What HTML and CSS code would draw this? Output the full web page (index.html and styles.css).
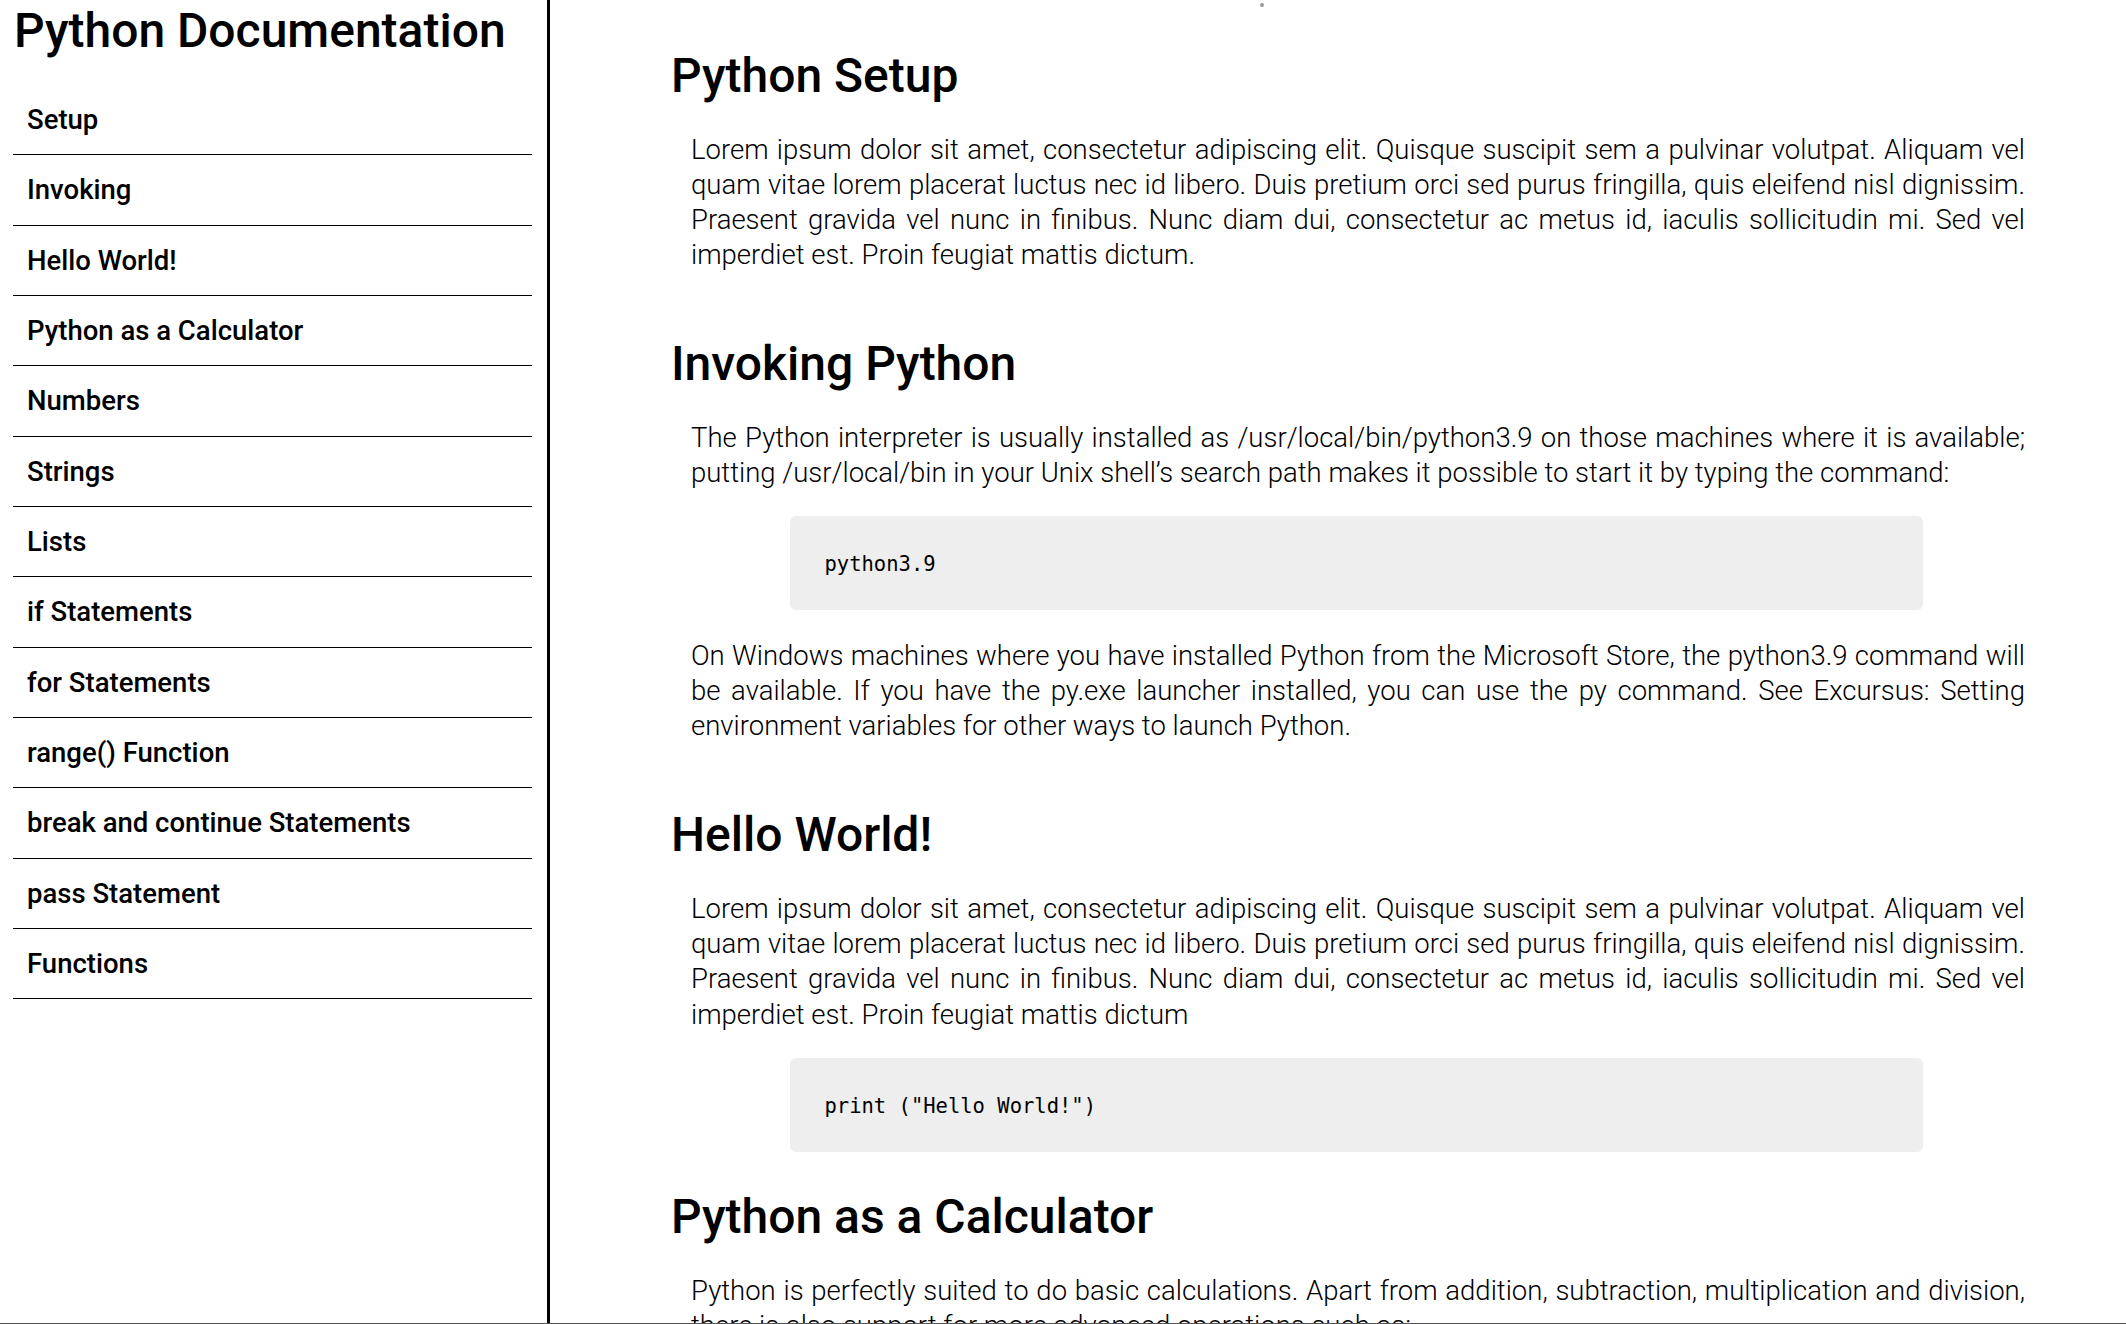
FILE: index.html
```html
<!DOCTYPE html>
<html lang="en">
<head>
<meta charset="utf-8">
<title>Python Documentation</title>
<link rel="stylesheet" href="styles.css">
</head>
<body>
<div class="page">
  <nav class="sidebar">
    <header class="brand">Python Documentation</header>
    <ul class="nav-list">
      <li class="nav-item"><a class="nav-link" href="#setup">Setup</a></li>
      <li class="nav-item"><a class="nav-link" href="#invoking">Invoking</a></li>
      <li class="nav-item"><a class="nav-link" href="#hello">Hello World!</a></li>
      <li class="nav-item"><a class="nav-link" href="#calc">Python as a Calculator</a></li>
      <li class="nav-item"><a class="nav-link" href="#numbers">Numbers</a></li>
      <li class="nav-item"><a class="nav-link" href="#strings">Strings</a></li>
      <li class="nav-item"><a class="nav-link" href="#lists">Lists</a></li>
      <li class="nav-item"><a class="nav-link" href="#if">if Statements</a></li>
      <li class="nav-item"><a class="nav-link" href="#for">for Statements</a></li>
      <li class="nav-item"><a class="nav-link" href="#range">range() Function</a></li>
      <li class="nav-item"><a class="nav-link" href="#break">break and continue Statements</a></li>
      <li class="nav-item"><a class="nav-link" href="#pass">pass Statement</a></li>
      <li class="nav-item"><a class="nav-link" href="#functions">Functions</a></li>
    </ul>
  </nav>
  <main class="content">
    <span class="dot"></span>
    <section class="doc-section" id="setup">
      <h2 class="doc-title">Python Setup</h2>
      <p class="doc-text">Lorem ipsum dolor sit amet, consectetur adipiscing elit. Quisque suscipit sem a pulvinar volutpat. Aliquam vel quam vitae lorem placerat luctus nec id libero. Duis pretium orci sed purus fringilla, quis eleifend nisl dignissim. Praesent gravida vel nunc in finibus. Nunc diam dui, consectetur ac metus id, iaculis sollicitudin mi. Sed vel imperdiet est. Proin feugiat mattis dictum.</p>
    </section>
    <section class="doc-section" id="invoking">
      <h2 class="doc-title">Invoking Python</h2>
      <p class="doc-text">The Python interpreter is usually installed as /usr/local/bin/python3.9 on those machines where it is available; putting /usr/local/bin in your Unix shell’s search path makes it possible to start it by typing the command:</p>
      <pre class="code-block"><code>python3.9</code></pre>
      <p class="doc-text">On Windows machines where you have installed Python from the Microsoft Store, the python3.9 command will be available. If you have the py.exe launcher installed, you can use the py command. See Excursus: Setting environment variables for other ways to launch Python.</p>
    </section>
    <section class="doc-section" id="hello">
      <h2 class="doc-title">Hello World!</h2>
      <p class="doc-text">Lorem ipsum dolor sit amet, consectetur adipiscing elit. Quisque suscipit sem a pulvinar volutpat. Aliquam vel quam vitae lorem placerat luctus nec id libero. Duis pretium orci sed purus fringilla, quis eleifend nisl dignissim. Praesent gravida vel nunc in finibus. Nunc diam dui, consectetur ac metus id, iaculis sollicitudin mi. Sed vel imperdiet est. Proin feugiat mattis dictum</p>
      <pre class="code-block"><code>print ("Hello World!")</code></pre>
    </section>
    <section class="doc-section" id="calc">
      <h2 class="doc-title">Python as a Calculator</h2>
      <p class="doc-text">Python is perfectly suited to do basic calculations. Apart from addition, subtraction, multiplication and division, there is also support for more advanced operations such as:</p>
    </section>
  </main>
</div>
</body>
</html>
```

FILE: styles.css
```css
html, body {
  margin: 0;
  padding: 0;
  height: 100%;
  background: #ffffff;
  overflow: hidden;
}

body {
  font-family: Roboto, "Liberation Sans", sans-serif;
  color: #000;
  border-bottom: 1px solid #555;
  box-sizing: border-box;
}

.page {
  display: flex;
  height: 100%;
  align-items: stretch;
}

.sidebar {
  flex: 0 0 547px;
  border-right: 3px solid #000;
  display: flex;
  flex-direction: column;
}

.brand {
  font-size: 48px;
  font-weight: 500;
  line-height: 56px;
  margin: 3px 0 0 14px;
  white-space: nowrap;
}

.nav-list {
  list-style: none;
  margin: 26px 0 0 13px;
  padding: 0;
  width: 519px;
}

.nav-item {
  border-bottom: 1px solid #000;
  height: 69.33px;
  display: flex;
  align-items: center;
}

.nav-link {
  font-size: 27.5px;
  font-weight: 500;
  color: #000;
  text-decoration: none;
  padding-left: 14px;
}

.content {
  flex: 1;
  position: relative;
  padding: 48px 101px 0 121px;
  display: flex;
  flex-direction: column;
  gap: 37.5px;
  min-width: 0;
}

.dot {
  position: absolute;
  left: 710px;
  top: 3px;
  width: 4px;
  height: 4px;
  border-radius: 50%;
  background: #9a9a9a;
}

.doc-section {
  display: flow-root;
}

.doc-title {
  font-size: 48px;
  font-weight: 500;
  line-height: 56px;
  margin: 0;
}

.doc-text {
  font-size: 27.5px;
  font-weight: 300;
  line-height: 35.3px;
  text-align: justify;
  margin: 27.5px 0 26px 20px;
}

.code-block {
  margin: 0 102px 0 119px;
  background: #eeeeee;
  border-radius: 6px;
  padding: 36px 32px 34px 34.5px;
  font-family: "DejaVu Sans Mono", monospace;
  font-size: 20.5px;
  line-height: 24px;
}
```
